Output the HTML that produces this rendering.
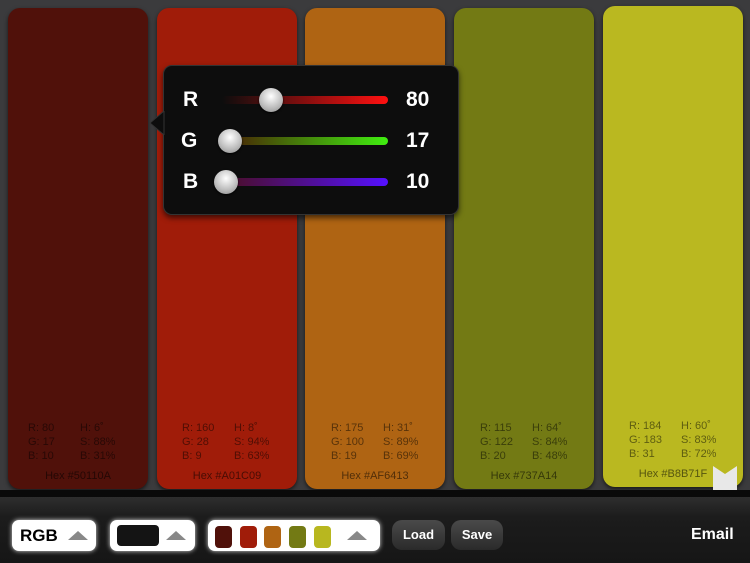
<!DOCTYPE html>
<html><head><style>
body{margin:0;width:750px;height:563px;background:#3b3b3d;font-family:"Liberation Sans",sans-serif;position:relative;overflow:hidden}
.card{position:absolute;width:140px;height:481px;top:8px;border-radius:12px;box-shadow:0 2px 4px rgba(0,0,0,.6)}
.info{position:absolute;left:0;right:0;top:414px;font-size:11px;color:rgba(0,0,0,.5)}
.info span{position:absolute}
.hex{position:absolute;top:462px;left:0;right:0;text-align:center;font-size:11px;color:rgba(0,0,0,.55)}
.bar{position:absolute;left:0;top:490px;width:750px;height:8px;background:#0a0a0a}
.bot{position:absolute;left:0;top:497px;width:750px;height:66px;background:linear-gradient(#2e2e2e,#1c1c1c 30%,#161616)}
.wb{position:absolute;top:520px;height:31px;background:#fff;border-radius:7px;box-shadow:0 0 5px #ddd}
.tri{position:absolute;width:0;height:0;border-left:10px solid transparent;border-right:10px solid transparent;border-bottom:9px solid #888}
.db{position:absolute;top:520px;height:30px;border-radius:10px;background:linear-gradient(#4a4a4a,#2a2a2a);color:#fff;font-weight:bold;font-size:13px;text-align:center;line-height:30px}
.pop{position:absolute;left:163px;top:65px;width:296px;height:150px;background:#0d0d0d;border-radius:9px;border:1px solid #333;box-sizing:border-box;box-shadow:0 3px 6px rgba(0,0,0,.6)}
.lbl{position:absolute;color:#fff;font-weight:bold;font-size:21px}
.trk{position:absolute;left:58px;width:166px;height:8px;border-radius:4px}
.knob{position:absolute;width:24px;height:24px;border-radius:50%;background:radial-gradient(circle at 50% 35%,#fff,#bbb 60%,#888);box-shadow:0 1px 2px #000}
.sw{position:absolute;top:526px;width:17px;height:22px;border-radius:4px}
</style></head><body>
<div class="card" style="left:8px;background:#50110A"><div class="info"><span style="left:20px">R: 80</span><span style="left:72px">H: 6˚</span><span style="left:20px;top:14px">G: 17</span><span style="left:72px;top:14px">S: 88%</span><span style="left:20px;top:28px">B: 10</span><span style="left:72px;top:28px">B: 31%</span></div><div class="hex">Hex #50110A</div></div>
<div class="card" style="left:157px;background:#A01C09"><div class="info"><span style="left:25px">R: 160</span><span style="left:77px">H: 8˚</span><span style="left:25px;top:14px">G: 28</span><span style="left:77px;top:14px">S: 94%</span><span style="left:25px;top:28px">B: 9</span><span style="left:77px;top:28px">B: 63%</span></div><div class="hex">Hex #A01C09</div></div>
<div class="card" style="left:305px;background:#AF6413"><div class="info"><span style="left:26px">R: 175</span><span style="left:78px">H: 31˚</span><span style="left:26px;top:14px">G: 100</span><span style="left:78px;top:14px">S: 89%</span><span style="left:26px;top:28px">B: 19</span><span style="left:78px;top:28px">B: 69%</span></div><div class="hex">Hex #AF6413</div></div>
<div class="card" style="left:454px;background:#737A14"><div class="info"><span style="left:26px">R: 115</span><span style="left:78px">H: 64˚</span><span style="left:26px;top:14px">G: 122</span><span style="left:78px;top:14px">S: 84%</span><span style="left:26px;top:28px">B: 20</span><span style="left:78px;top:28px">B: 48%</span></div><div class="hex">Hex #737A14</div></div>
<div class="card" style="left:603px;top:6px;background:#BAB820"><div class="info"><span style="left:26px">R: 184</span><span style="left:78px">H: 60˚</span><span style="left:26px;top:14px">G: 183</span><span style="left:78px;top:14px">S: 83%</span><span style="left:26px;top:28px">B: 31</span><span style="left:78px;top:28px">B: 72%</span></div><div class="hex">Hex #B8B71F</div></div>
<svg style="position:absolute;left:713px;top:466px" width="24" height="30"><path d="M0 0 L12 8 L24 0 L24 30 L0 30Z" fill="#e8e8e8"/></svg>
<div class="bar"></div><div class="bot"></div>
<div class="pop">
<svg style="position:absolute;left:-17px;top:45px" width="18" height="24"><path d="M17 0 L3 12 L17 24Z" fill="#0d0d0d" stroke="#333"/></svg>
<div class="lbl" style="left:19px;top:22px">R</div><div class="lbl" style="left:17px;top:63px">G</div><div class="lbl" style="left:19px;top:104px">B</div>
<div class="trk" style="top:30px;background:linear-gradient(90deg,#0d0d0d,#ff1010)"></div>
<div class="trk" style="top:71px;background:linear-gradient(90deg,#4a1a05,#40ee10)"></div>
<div class="trk" style="top:112px;background:linear-gradient(90deg,#4a0e20,#5510ff)"></div>
<div class="knob" style="left:95px;top:22px"></div><div class="knob" style="left:54px;top:63px"></div><div class="knob" style="left:50px;top:104px"></div>
<div class="lbl" style="left:242px;top:22px">80</div><div class="lbl" style="left:242px;top:63px">17</div><div class="lbl" style="left:242px;top:104px">10</div>
</div>
<div class="wb" style="left:12px;width:84px"><span style="position:absolute;left:8px;top:6px;font-weight:bold;font-size:17px">RGB</span><div class="tri" style="left:56px;top:11px"></div></div>
<div class="wb" style="left:110px;width:85px"><div style="position:absolute;left:7px;top:5px;width:42px;height:21px;background:#141414;border-radius:4px"></div><div class="tri" style="left:56px;top:11px"></div></div>
<div class="wb" style="left:208px;width:172px"><div class="tri" style="left:139px;top:11px"></div></div>
<div class="sw" style="left:215px;background:#50110A"></div><div class="sw" style="left:240px;background:#A01C09"></div><div class="sw" style="left:264px;background:#AF6413"></div><div class="sw" style="left:289px;background:#737A14"></div><div class="sw" style="left:314px;background:#B8B71F"></div>
<div class="db" style="left:392px;width:53px">Load</div>
<div class="db" style="left:451px;width:52px">Save</div>
<div style="position:absolute;left:691px;top:526px;color:#fff;font-weight:bold;font-size:16px">Email</div>
</body></html>
